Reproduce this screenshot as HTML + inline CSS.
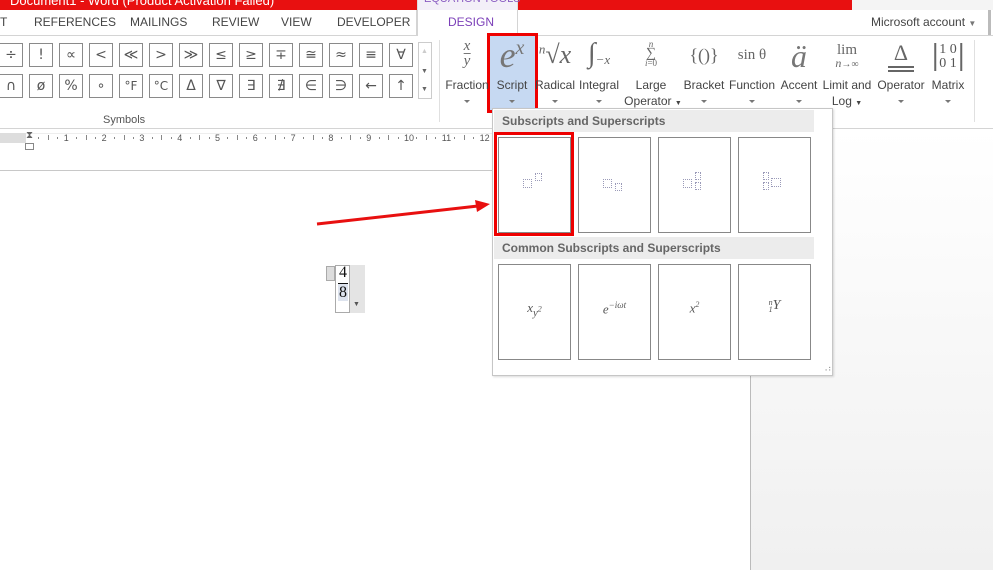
<!DOCTYPE html>
<html><head><meta charset="utf-8"><style>
*{margin:0;padding:0;box-sizing:border-box}
body{width:993px;height:570px;overflow:hidden;position:relative;background:#fff;font-family:"Liberation Sans",sans-serif;font-size:12px;color:#444}
.a{position:absolute}
.cell{position:absolute;width:24px;height:24px;border:1px solid #8a8a8a;background:#fff;text-align:center;line-height:22px;font-size:14px;color:#555;font-family:"DejaVu Sans",sans-serif}
.lbl{position:absolute;font-size:12px;color:#444;text-align:center;white-space:nowrap;transform:translateX(-50%)}
.ic{position:absolute;transform:translateX(-50%);font-family:"Liberation Serif",serif;color:#666;white-space:nowrap;text-align:center}
.dd{position:absolute;width:0;height:0;border-left:3px solid transparent;border-right:3px solid transparent;border-top:3px solid #777;transform:translateX(-50%)}
.g{position:absolute;width:73px;height:96px;border:1px solid #888;background:#fff}
.hd{position:absolute;left:494px;width:320px;height:22px;background:#ececec;font-weight:bold;color:#666;font-size:12px;line-height:22px;padding-left:8px}
.m{position:absolute;left:0;right:0;text-align:center;font-family:"Liberation Serif",serif;font-style:italic;color:#555;font-size:13px}
.b{position:absolute;border:1px dotted #9a9ab8}
</style></head><body>
<div class="a" style="left:0;top:0;width:852px;height:10px;background:#e81010"></div>
<div class="a" style="left:10px;top:-7px;color:#fff;font-size:13px;white-space:nowrap">Document1 - Word (Product Activation Failed)</div>
<div class="a" style="left:417px;top:0;width:101px;height:11px;background:#f3eff8;border-left:1px solid #ddd;border-right:1px solid #ddd"></div>
<div class="a" style="left:424px;top:-7px;color:#8a5cc2;font-size:11px">EQUATION TOOLS</div>
<div class="a" style="left:852px;top:0;width:141px;height:10px;background:#f4f4f4"></div>
<div class="a" style="left:0;top:35px;width:993px;height:1px;background:#d4d4d4"></div>
<div class="a" style="left:417px;top:10px;width:101px;height:26px;background:#fff;border-left:1px solid #d4d4d4;border-right:1px solid #d4d4d4"></div>
<div class="a" style="left:0;top:10px;width:417px;height:25px;border-right:1px solid #d4d4d4"></div>
<div class="a" style="left:0;top:15px;font-size:12px;color:#444">T</div>
<div class="a" style="left:34px;top:15px;font-size:12px;color:#444">REFERENCES</div>
<div class="a" style="left:130px;top:15px;font-size:12px;color:#444">MAILINGS</div>
<div class="a" style="left:212px;top:15px;font-size:12px;color:#444">REVIEW</div>
<div class="a" style="left:281px;top:15px;font-size:12px;color:#444">VIEW</div>
<div class="a" style="left:337px;top:15px;font-size:12px;color:#444">DEVELOPER</div>
<div class="a" style="left:448px;top:15px;font-size:12px;color:#7b3fb8">DESIGN</div>
<div class="a" style="left:871px;top:15px;font-size:12px;color:#444">Microsoft account <span style="font-size:8px;color:#777">▼</span></div>
<div class="a" style="left:988px;top:10px;width:3px;height:25px;background:#bbb"></div>
<div class="a" style="left:0;top:128px;width:993px;height:1px;background:#d4d4d4"></div>
<div id="sym"></div>
<div class="a" style="left:418px;top:42px;width:14px;height:57px;border:1px solid #ccc;background:#fff"></div>
<div class="a" style="left:421px;top:48px;font-size:7px;color:#ccc">▲</div>
<div class="a" style="left:421px;top:68px;font-size:7px;color:#666">▼</div>
<div class="a" style="left:421px;top:86px;font-size:7px;color:#666">▼</div>
<div class="a" style="left:103px;top:114px;font-size:11px;color:#555">Symbols</div>
<div class="a" style="left:439px;top:40px;width:1px;height:82px;background:#e0e0e0"></div>
<div class="a" style="left:974px;top:40px;width:1px;height:82px;background:#e0e0e0"></div>
<div class="a" style="left:487px;top:33px;width:51px;height:80px;border:3px solid #e00;background:#c6d9f2"></div>
<div class="ic" style="left:467px;top:40px;font-size:15px;font-style:italic;line-height:13px">x<br><span style="display:inline-block;border-top:1px solid #777;padding-top:1px">y</span></div>
<div class="ic" style="left:512px;top:34px;font-size:36px;font-style:italic;color:#777">e<sup style="font-size:20px">x</sup></div>
<div class="ic" style="left:555px;top:40px;font-size:26px;font-style:italic;color:#666"><sup style="font-size:13px">n</sup>√x</div>
<div class="ic" style="left:599px;top:38px;font-size:28px;color:#666">∫<span style="font-size:13px;font-style:italic;position:relative;top:2px">−x</span></div>
<div class="ic" style="left:651px;top:40px;font-size:9px;line-height:9px;color:#666"><i>n</i><br><span style="font-size:14px">∑</span><br><i>i</i>=0</div>
<div class="ic" style="left:704px;top:45px;font-size:18px;color:#666">{()}</div>
<div class="ic" style="left:752px;top:47px;font-size:15px;color:#666">sin θ</div>
<div class="ic" style="left:799px;top:38px;font-size:32px;font-style:italic;color:#777">ä</div>
<div class="ic" style="left:847px;top:44px;font-size:15px;line-height:13px;color:#666">lim<br><i style="font-size:12px">n</i><span style="font-size:10px">→∞</span></div>
<div class="ic" style="left:901px;top:40px;font-size:22px;color:#666">Δ</div>
<div class="a" style="left:888px;top:66px;width:26px;height:2px;background:#666"></div>
<div class="a" style="left:888px;top:70px;width:26px;height:2px;background:#666"></div>
<div class="ic" style="left:948px;top:43px;font-size:14px;line-height:14px;color:#555;border-left:2px solid #666;border-right:2px solid #666;padding:0 3px">1 0<br>0 1</div>
<div class="lbl" style="left:467px;top:78px">Fraction</div><div class="dd" style="left:467px;top:100px"></div>
<div class="lbl" style="left:512px;top:78px">Script</div><div class="dd" style="left:512px;top:100px"></div>
<div class="lbl" style="left:555px;top:78px">Radical</div><div class="dd" style="left:555px;top:100px"></div>
<div class="lbl" style="left:599px;top:78px">Integral</div><div class="dd" style="left:599px;top:100px"></div>
<div class="lbl" style="left:651px;top:78px">Large</div><div class="lbl" style="left:653px;top:94px">Operator <span style="font-size:7px">▼</span></div>
<div class="lbl" style="left:704px;top:78px">Bracket</div><div class="dd" style="left:704px;top:100px"></div>
<div class="lbl" style="left:752px;top:78px">Function</div><div class="dd" style="left:752px;top:100px"></div>
<div class="lbl" style="left:799px;top:78px">Accent</div><div class="dd" style="left:799px;top:100px"></div>
<div class="lbl" style="left:847px;top:78px">Limit and</div><div class="lbl" style="left:847px;top:94px">Log <span style="font-size:7px">▼</span></div>
<div class="lbl" style="left:901px;top:78px">Operator</div><div class="dd" style="left:901px;top:100px"></div>
<div class="lbl" style="left:948px;top:78px">Matrix</div><div class="dd" style="left:948px;top:100px"></div>
<div class="a" style="left:0;top:133px;width:26px;height:10px;background:#ddd"></div>
<div class="a" style="left:26px;top:133px;width:470px;height:10px;background:#fff;border-top:1px solid #eee"></div>
<div class="a" style="left:26px;top:130px;font-size:10px;color:#666">⧗</div>
<div class="a" style="left:25px;top:143px;width:9px;height:7px;border:1px solid #888;background:#fff"></div>
<div id="rul"></div>
<div class="a" style="left:750px;top:129px;width:243px;height:441px;background:linear-gradient(#fff,#f0f0f0);border-left:1px solid #bbb"></div>
<div class="a" style="left:0;top:170px;width:750px;height:1px;background:#c8c8c8"></div>
<svg class="a" style="left:0;top:0" width="993" height="570"><line x1="317" y1="224" x2="478" y2="206" stroke="#e81010" stroke-width="3"/><polygon points="490,204 475,200 477,212" fill="#e81010"/></svg>
<div class="a" style="left:326px;top:266px;width:9px;height:15px;background:#ddd;border:1px solid #aaa"></div>
<div class="a" style="left:335px;top:265px;width:30px;height:48px;border:1px solid #aaa;background:#fff"></div>
<div class="a" style="left:349px;top:265px;width:16px;height:48px;background:#e4e4e4;border-left:1px solid #aaa"></div>
<div class="a" style="left:353px;top:301px;font-size:7px;color:#555">▼</div>
<div class="a" style="left:338px;top:264px;font-family:'Liberation Serif',serif;font-size:16px;line-height:17px;color:#111;text-align:center;width:10px">4<br><span style="display:block;border-top:1px solid #111;background:#dde3ee;margin-top:2px">8</span></div>
<div class="a" style="left:492px;top:108px;width:341px;height:268px;background:#fff;border:1px solid #c6c6c6;box-shadow:1px 1px 2px rgba(0,0,0,.15)"></div>
<div class="hd" style="top:110px">Subscripts and Superscripts</div>
<div class="hd" style="top:237px">Common Subscripts and Superscripts</div>
<div class="a" style="left:494px;top:132px;width:80px;height:104px;border:3px solid #e00"></div>
<div class="g" style="left:498px;top:137px"><div class="b" style="left:24px;top:41px;width:9px;height:9px"></div><div class="b" style="left:36px;top:35px;width:7px;height:8px"></div></div>
<div class="g" style="left:578px;top:137px"><div class="b" style="left:24px;top:41px;width:9px;height:9px"></div><div class="b" style="left:36px;top:45px;width:7px;height:8px"></div></div>
<div class="g" style="left:658px;top:137px"><div class="b" style="left:24px;top:41px;width:9px;height:9px"></div><div class="b" style="left:36px;top:34px;width:6px;height:8px"></div><div class="b" style="left:36px;top:44px;width:6px;height:8px"></div></div>
<div class="g" style="left:738px;top:137px"><div class="b" style="left:24px;top:34px;width:6px;height:8px"></div><div class="b" style="left:24px;top:44px;width:6px;height:8px"></div><div class="b" style="left:32px;top:40px;width:10px;height:9px"></div></div>
<div class="g" style="left:498px;top:264px"><div class="m" style="top:35px">x<sub>y<sup style="font-size:8px">2</sup></sub></div></div>
<div class="g" style="left:578px;top:264px"><div class="m" style="top:35px">e<sup style="font-size:9px">−iωt</sup></div></div>
<div class="g" style="left:658px;top:264px"><div class="m" style="top:35px">x<sup style="font-size:8px">2</sup></div></div>
<div class="g" style="left:738px;top:264px"><div class="m" style="top:33px;font-size:14px"><span style="font-size:8px;display:inline-block;line-height:7px;vertical-align:middle">n<br>1</span>Y</div></div>
<div class="a" style="left:822px;top:364px;font-size:8px;color:#999">⠠⠆</div>
<script>
var r1="÷ ! ∝ < ≪ > ≫ ≤ ≥ ∓ ≅ ≈ ≡ ∀".split(" "),r2="∩ ø % ∘ °F °C Δ ∇ ∃ ∄ ∈ ∋ ← ↑".split(" "),h="";
for(var i=0;i<14;i++){var x=-1+30*i;h+='<div class="cell" style="left:'+x+'px;top:43px">'+r1[i]+'</div><div class="cell" style="left:'+x+'px;top:74px;font-size:'+(r2[i].length>1?12:14)+'px">'+r2[i]+'</div>';}
document.getElementById('sym').innerHTML=h;
var s="";for(var k=1;k<=12;k++){var x=29+37.8*k;s+='<div class="a" style="left:'+(x-3)+'px;top:133px;font-size:9px;color:#555">'+k+'</div>';
for(var j=1;j<4;j++){var t=x-37.8+9.45*j;s+='<div class="a" style="left:'+t+'px;top:'+(j==2?135:137)+'px;width:1px;height:'+(j==2?5:2)+'px;background:#888"></div>';}}
document.getElementById('rul').innerHTML=s;
</script>
</body></html>
